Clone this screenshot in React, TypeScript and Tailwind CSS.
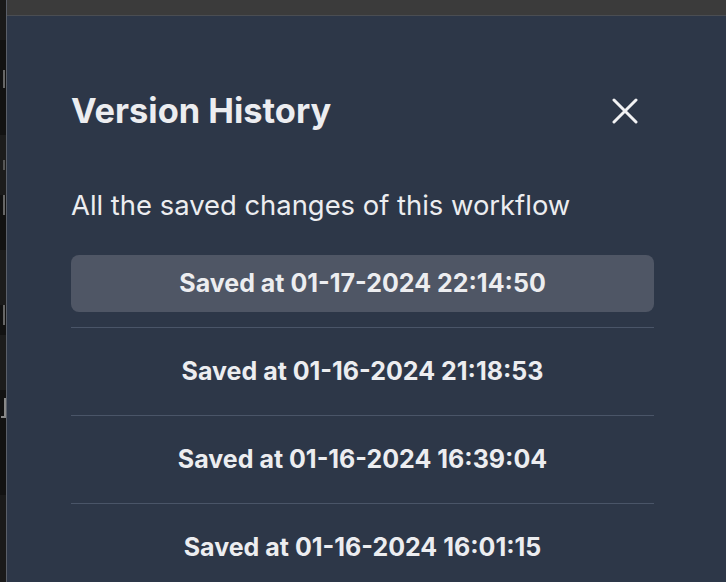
import React from "react";

const rows = [
  "Saved at 01-17-2024 22:14:50",
  "Saved at 01-16-2024 21:18:53",
  "Saved at 01-16-2024 16:39:04",
  "Saved at 01-16-2024 16:01:15",
];

export default function App() {
  return (
    <div
      className="w-[726px] h-[582px] overflow-hidden flex bg-[#121212]"
      style={{ fontFamily: "Inter, 'Noto Sans', sans-serif" }}
    >
      {/* background page strip */}
      <div className="w-[6px] h-full flex flex-col bg-[#121212]">
        <div className="h-[40px] bg-[#1a1a1a]" />
        <div className="h-[30px]" />
        <div className="h-[20px] flex justify-end pr-[1px]"><div className="w-[2px] h-[18px] bg-[#666]" /></div>
        <div className="h-[45px]" />
        <div className="h-[60px] bg-[#1c1c1c] flex items-center justify-end pr-[1px]"><div className="w-[2px] h-[10px] bg-[#555]" /></div>
        <div className="h-[25px] flex justify-end pr-[1px]"><div className="w-[2px] h-[20px] bg-[#666]" /></div>
        <div className="h-[30px]" />
        <div className="h-[55px] bg-[#1c1c1c]" />
        <div className="h-[30px] flex justify-end pr-[1px]"><div className="w-[2px] h-[20px] bg-[#666]" /></div>
        <div className="h-[55px] bg-[#1c1c1c]" />
        <div className="h-[35px] flex items-center justify-end overflow-hidden">
          <div className="w-[5px] h-[20px] border-b-2 border-[#888] border-r-2" />
        </div>
        <div className="h-[70px]" />
        <div className="flex-1 bg-[#1a1a1a]" />
      </div>
      <div className="w-px h-full bg-[#5a5f69]" />
      <div className="flex-1 flex flex-col">
        <div className="h-[16px] bg-[#3b3b3b] border-b border-[#4a4d52]" />
        <div className="flex-1 bg-[#2D3748] pl-[64px] pr-[72px] pt-[75px] text-[#ECEDF0]">
          <div className="flex items-center justify-between h-[40px]">
            <div className="text-[34.4px] leading-[40px] font-bold">Version History</div>
            <svg width="26" height="26" viewBox="0 0 26 26" className="mr-[16px]">
              <path d="M2 2 L24 24 M24 2 L2 24" stroke="#F2F2F4" strokeWidth="3" strokeLinecap="round" />
            </svg>
          </div>
          <div className="mt-[56px] text-[27.4px] leading-[36px]">All the saved changes of this workflow</div>
          <div className="mt-[32px] flex flex-col">
            {rows.map((r, i) => (
              <React.Fragment key={r}>
                {i > 0 && <div className="h-px bg-[#4A5568] my-[15px]" />}
                <div
                  className={
                    "h-[57px] rounded-lg flex items-center justify-center text-[25px] font-bold " +
                    (i === 0 ? "bg-[#4F5665]" : "")
                  }
                >
                  {r}
                </div>
              </React.Fragment>
            ))}
          </div>
        </div>
      </div>
    </div>
  );
}
